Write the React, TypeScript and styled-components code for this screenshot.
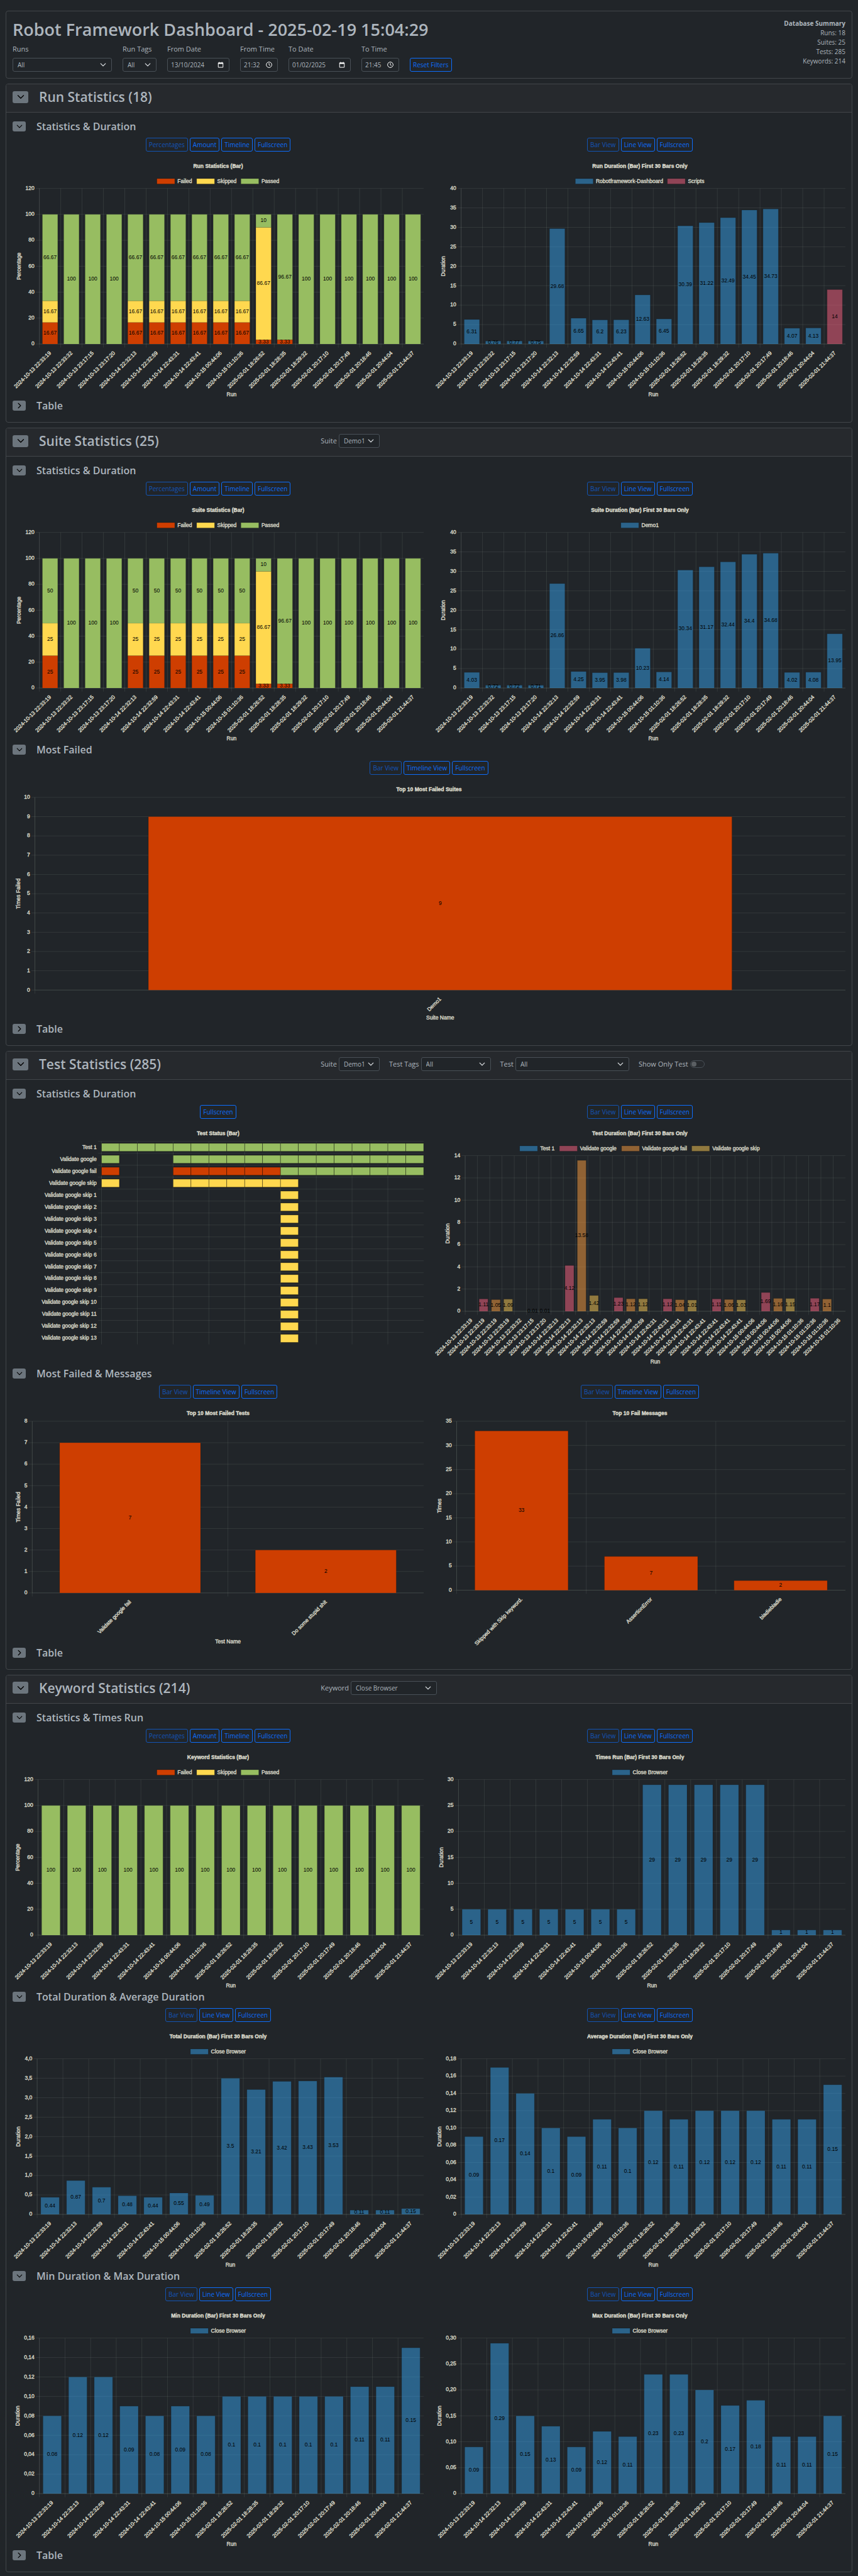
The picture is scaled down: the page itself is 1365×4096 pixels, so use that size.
import React, { useId, useState } from "react";
import styled, { createGlobalStyle, css } from "styled-components";

const theme = {
  bg: "#212529",
  head: "#26292d",
  border: "#42464a",
  inputBorder: "#495057",
  text: "#adb5bd",
  primary: "#0d6efd",
  secondary: "#6c757d",
  chartText: "#e2e1d8",
  grid: "rgba(205, 225, 210, 0.15)",
  failed: "#ce3e01",
  skipped: "#ffd84f",
  passed: "#97bd61",
  blue: "rgba(54, 162, 235, 0.5)",
  pink: "rgba(255, 99, 132, 0.5)",
  orange: "rgba(255, 159, 64, 0.5)",
  gold: "rgba(255, 205, 86, 0.5)",
};

const GlobalStyle = createGlobalStyle`
  *, *::before, *::after { box-sizing: border-box; }
  body {
    margin: 0;
    background: ${theme.bg};
    color: ${theme.text};
    font-family: "Open Sans", "Noto Sans", sans-serif;
    font-size: 11px;
  }
  h1, h2, h3 { margin: 0; font-weight: 600; white-space: nowrap; }
  button, input, select { font-family: inherit; }
`;

/* ---------- page parts ---------- */

const Page = styled.main`
  display: flex;
  flex-direction: column;
  gap: 8px;
  padding: 17px 9px 7px;
`;

const Card = styled.section`
  border: 1px solid ${theme.border};
  border-radius: 4px;
  overflow: hidden;
`;

const TopCard = styled.header`
  display: flex;
  justify-content: space-between;
  padding: 12px 10px 10px;
  border: 1px solid ${theme.border};
  border-radius: 4px;
`;

const PageTitle = styled.h1`
  font-size: 27px;
  line-height: 34px;
`;

const FilterRow = styled.form`
  display: flex;
  align-items: flex-end;
  gap: 17px;
  margin-top: 7px;
`;

const Field = styled.div`
  display: flex;
  flex-direction: column;
  gap: 7px;
`;

const FieldLabel = styled.label`
  font-size: 11px;
  line-height: 14px;
  white-space: nowrap;
`;

const Control = styled.span<{ $width: number }>`
  display: grid;
  grid-template-columns: 1fr auto;
  align-items: center;
  width: ${(p) => p.$width}px;
  height: 22px;
`;

const controlBox = css`
  grid-area: 1 / 1 / 2 / 3;
  width: 100%;
  height: 22px;
  margin: 0;
  padding: 0 7px;
  border: 1px solid ${theme.inputBorder};
  border-radius: 3px;
  background: ${theme.bg};
  color: ${theme.text};
  font-size: 10px;
`;

const Select = styled.select`
  ${controlBox}
  appearance: none;
`;

const Input = styled.input`
  ${controlBox}
  padding: 0 5px;
`;

const ControlIcon = styled.svg`
  grid-area: 1 / 2 / 2 / 3;
  width: 10px;
  height: 10px;
  margin-right: 9px;
  fill: none;
  pointer-events: none;
`;

const Summary = styled.aside`
  font-size: 10px;
  line-height: 15px;
  text-align: right;
`;

const CardHead = styled.div`
  display: flex;
  align-items: center;
  height: 45px;
  padding: 0 10px 4px;
  border-bottom: 1px solid ${theme.border};
  background: ${theme.head};
`;

const HeadTitle = styled.div`
  display: flex;
  align-items: center;
  gap: 17px;
  flex: 0 0 37%;
`;

const SectionTitle = styled.h2`
  font-size: 21px;
  line-height: 28px;
`;

const HeadControls = styled.div`
  display: flex;
  align-items: center;
  gap: 15px;
`;

const InlineField = styled.div`
  display: flex;
  align-items: center;
  gap: 3px;
`;

const Switch = styled.input`
  appearance: none;
  display: flex;
  align-items: center;
  width: 23px;
  height: 12px;
  margin: 0;
  padding: 0 1px;
  border: 1px solid ${theme.inputBorder};
  border-radius: 6px;
  &::before {
    content: "";
    width: 8px;
    height: 8px;
    border-radius: 4px;
    background: #5b5f63;
  }
  &:checked {
    justify-content: flex-end;
    background: ${theme.primary};
  }
`;

const CardBody = styled.div`
  padding: 12px 10px 16px;
`;

const BlockHead = styled.div`
  display: flex;
  align-items: center;
  gap: 17px;
  height: 20px;
`;

const BlockTitle = styled.h3`
  font-size: 16px;
  line-height: 20px;
`;

const Toggle = styled.button<{ $large?: boolean }>`
  display: grid;
  place-items: center;
  width: ${(p) => (p.$large ? 25 : 21)}px;
  height: ${(p) => (p.$large ? 19 : 16)}px;
  padding: 0;
  border: 0;
  border-radius: 3px;
  background: ${theme.secondary};
  & > svg {
    width: ${(p) => (p.$large ? 12 : 10)}px;
    height: ${(p) => (p.$large ? 12 : 10)}px;
  }
`;

const ChartRow = styled.div<{ $columns: number }>`
  display: grid;
  grid-template-columns: repeat(${(p) => p.$columns}, minmax(0, 1fr));
  gap: 17px;
  padding-top: 8px;
`;

const ChartCell = styled.div`
  display: flex;
  flex-direction: column;
  gap: 11px;
`;

const ButtonRow = styled.div`
  display: flex;
  justify-content: center;
  gap: 3px;
`;

const OutlineButton = styled.button`
  height: 22px;
  padding: 0 4px;
  border: 1px solid ${theme.primary};
  border-radius: 3px;
  background: transparent;
  color: ${theme.primary};
  font-size: 10px;
  line-height: 20px;
  white-space: nowrap;
  &:disabled {
    opacity: 0.65;
  }
`;

const Canvas = styled.svg`
  display: block;
  width: 100%;
  height: auto;
  font-family: "Liberation Sans", Arial, sans-serif;
  font-size: 12px;
`;

const ChartText = styled.text`
  fill: ${theme.chartText};
  stroke: ${theme.chartText};
  stroke-width: 0.4;
`;

const BarText = styled.text`
  fill: #000;
`;

/* ---------- icons ---------- */

function Chevron({ open }: { open: boolean }) {
  return (
    <svg viewBox="0 0 16 16" fill="none" stroke="#000" strokeWidth="1.8" strokeLinecap="round" strokeLinejoin="round" aria-hidden="true">
      <path d={open ? "M2 5l6 6 6-6" : "M5 2l6 6-6 6"} />
    </svg>
  );
}

function SelectArrow() {
  return (
    <ControlIcon viewBox="0 0 16 16" stroke="#dee2e6" strokeWidth="2" strokeLinecap="round" strokeLinejoin="round" aria-hidden="true">
      <path d="M2 5l6 6 6-6" />
    </ControlIcon>
  );
}

function CalendarIcon() {
  return (
    <ControlIcon viewBox="0 0 16 16" stroke="#fff" strokeWidth="1.6" aria-hidden="true">
      <path d="M2 3h12v11.5H2z" />
      <path d="M2 4.4h12" strokeWidth="2.8" />
      <path d="M4.6 0.8v2M11.4 0.8v2" />
    </ControlIcon>
  );
}

function ClockIcon() {
  return (
    <ControlIcon viewBox="0 0 16 16" stroke="#fff" strokeWidth="1.6" aria-hidden="true">
      <circle cx="8" cy="8" r="7" />
      <path d="M8 3.5V8l3 2.4" />
    </ControlIcon>
  );
}

/* ---------- charts ---------- */

const CHART_H = 539;
const HALF = 920;
const FULL = 1864;

type LegendItem = { label: string; color: string; width: number };
type Bar = { value: number; color: string };

function Txt(p: React.SVGProps<SVGTextElement>) {
  return <ChartText dominantBaseline="central" textAnchor="middle" {...p} />;
}

function Legend({ items, center }: { items: LegendItem[]; center: number }) {
  const total = items.reduce((s, i) => s + 46 + i.width, 0) + 10 * (items.length - 1);
  let x = center - total / 2;
  return (
    <g>
      {items.map((i) => {
        const at = x;
        x += 56 + i.width;
        return (
          <g key={i.label}>
            <rect x={at} y={45} width={40} height={12} fill={i.color} stroke="rgba(0,0,0,0.3)" />
            <Txt x={at + 46} y={50} textAnchor="start">{i.label}</Txt>
          </g>
        );
      })}
    </g>
  );
}

type BarChartProps = {
  title: string;
  width?: number;
  left: number;
  bottom?: number;
  yTitle: string;
  yTitleX: number;
  xTitle?: string;
  max: number;
  step: number;
  decimals?: number;
  legend?: LegendItem[];
  labels: string[];
  bars: Bar[][];
};

function BarChart(c: BarChartProps) {
  const width = c.width ?? HALF;
  const bottom = c.bottom ?? 415;
  const top = c.legend ? 67 : 35;
  const plotW = width - c.left;
  const cat = plotW / c.labels.length;
  const y = (v: number) => bottom - (v / c.max) * (bottom - top);
  const steps = Math.round(c.max / c.step);
  const ticks = Array.from({ length: steps + 1 }, (_, i) => i * c.step);
  const fmt = (v: number) => (v === 0 ? "0" : v.toFixed(c.decimals ?? 0).replace(".", ","));
  const mid = (top + bottom) / 2;
  return (
    <Canvas viewBox={`0 0 ${width} ${CHART_H}`} role="img" aria-label={c.title}>
      <Txt x={width / 2} y={17} fontWeight="bold">{c.title}</Txt>
      {c.legend && <Legend items={c.legend} center={width / 2} />}
      <g stroke={theme.grid}>
        {ticks.map((t) => (
          <line key={t} x1={c.left - 8} x2={width} y1={y(t)} y2={y(t)} />
        ))}
        {c.labels.map((_, i) => (
          <line key={i} x1={c.left + i * cat} x2={c.left + i * cat} y1={top} y2={bottom + 8} />
        ))}
        <line x1={c.left} x2={c.left} y1={top} y2={bottom} />
        <line x1={c.left} x2={width} y1={bottom} y2={bottom} />
      </g>
      {ticks.map((t) => (
        <Txt key={t} x={c.left - 11} y={y(t) - 1} textAnchor="end">{fmt(t)}</Txt>
      ))}
      {c.bars.map((stack, i) => {
        const cx = c.left + (i + 0.5) * cat;
        let base = 0;
        return (
          <g key={i}>
            {stack.map((b, j) => {
              const y0 = y(base);
              base += b.value;
              const y1 = y(base);
              if (b.value === 0) return null;
              return (
                <g key={j}>
                  <rect x={cx - cat * 0.36} width={cat * 0.72} y={y1} height={y0 - y1} fill={b.color} />
                  <path
                    d={`M${cx - cat * 0.36} ${y0}V${y1}H${cx + cat * 0.36}V${y0}`}
                    fill="none"
                    stroke="rgba(0,0,0,0.25)"
                  />
                  <BarText x={cx} y={(y0 + y1) / 2 - 1} textAnchor="middle" dominantBaseline="central">{b.value}</BarText>
                </g>
              );
            })}
          </g>
        );
      })}
      {c.labels.map((l, i) => {
        const x = c.left + (i + 0.5) * cat + 3;
        return (
          <ChartText key={i} textAnchor="end" transform={`translate(${x} ${bottom + 21}) rotate(-45)`}>
            {l}
          </ChartText>
        );
      })}
      <Txt transform={`translate(${c.yTitleX} ${mid}) rotate(-90)`}>{c.yTitle}</Txt>
      {c.xTitle && <Txt x={c.left + plotW / 2} y={528}>{c.xTitle}</Txt>}
    </Canvas>
  );
}

const STATUS_COLOR: Record<string, string> = { P: theme.passed, F: theme.failed, S: theme.skipped };

const statusRows: [string, string][] = [
  ["Test 1", "PPPPPPPPPPPPPPPPPP"],
  ["Validate google", "P---PPPPPPPPPPPPPP"],
  ["Validate google fail", "F---FFFFFFPPPPPPPP"],
  ["Validate google skip", "S---SSSSSSS-------"],
  ...Array.from({ length: 13 }, (_, i): [string, string] => [`Validate google skip ${i + 1}`, "----------S-------"]),
];

function StatusChart() {
  const left = 199;
  const top = 35;
  const row = 454 / statusRows.length;
  const unit = (HALF - left) / 18;
  return (
    <Canvas viewBox={`0 0 ${HALF} ${CHART_H}`} role="img" aria-label="Test Status (Bar)">
      <Txt x={HALF / 2} y={17} fontWeight="bold">Test Status (Bar)</Txt>
      <g stroke={theme.grid}>
        {statusRows.map((_, i) => (
          <line key={i} x1={left - 8} x2={HALF} y1={top + i * row} y2={top + i * row} />
        ))}
        {Array.from({ length: 9 }, (_, i) => (
          <line key={i} x1={left + i * 2 * unit} x2={left + i * 2 * unit} y1={top} y2={top + 454} />
        ))}
      </g>
      {statusRows.map(([name, runs], r) => {
        const cy = top + (r + 0.5) * row;
        return (
          <g key={name}>
            <Txt x={left - 11} y={cy - 1} textAnchor="end">{name}</Txt>
            {runs.split("").map((s, i) =>
              s === "-" ? null : (
                <rect
                  key={i}
                  x={left + i * unit}
                  y={cy - 9}
                  width={unit}
                  height={18}
                  fill={STATUS_COLOR[s]}
                  stroke="rgba(0,0,0,0.5)"
                />
              )
            )}
          </g>
        );
      })}
    </Canvas>
  );
}

/* ---------- data ---------- */

const RUNS = [
  "2024-10-13 22:33:19", "2024-10-13 22:33:32", "2024-10-13 23:17:15", "2024-10-13 23:17:20",
  "2024-10-14 22:32:13", "2024-10-14 22:32:59", "2024-10-14 22:43:31", "2024-10-14 22:43:41",
  "2024-10-15 00:44:06", "2024-10-15 01:10:36", "2025-02-01 18:26:52", "2025-02-01 18:28:35",
  "2025-02-01 18:29:32", "2025-02-01 20:17:10", "2025-02-01 20:17:49", "2025-02-01 20:18:46",
  "2025-02-01 20:44:04", "2025-02-01 21:44:37",
];
const KEYWORD_RUNS = RUNS.filter((_, i) => i < 1 || i > 3);
const TEST_RUNS = RUNS.slice(0, 10).flatMap((r, i) => (i > 0 && i < 4 ? [r] : [r, r, r, r]));

const one = (values: number[], color: string): Bar[][] => values.map((value) => [{ value, color }]);
const stack = (f: number, s: number, p: number): Bar[] => [
  { value: f, color: theme.failed },
  { value: s, color: theme.skipped },
  { value: p, color: theme.passed },
];
const mixed = (f: number, s: number, p: number) =>
  RUNS.map((_, i) => {
    if (i === 10) return stack(3.33, 86.67, 10);
    if (i === 11) return stack(3.33, 0, 96.67);
    if (i === 0 || (i > 3 && i < 10)) return stack(f, s, p);
    return stack(0, 0, 100);
  });

const statusLegend: LegendItem[] = [
  { label: "Failed", color: theme.failed, width: 33 },
  { label: "Skipped", color: theme.skipped, width: 43 },
  { label: "Passed", color: theme.passed, width: 40 },
];
const closeBrowser: LegendItem[] = [{ label: "Close Browser", color: theme.blue, width: 78 }];

const durations = [6.31, 0.76, 0.77, 0.75, 29.68, 6.65, 6.2, 6.23, 12.63, 6.45, 30.39, 31.22, 32.49, 34.45, 34.73, 4.07, 4.13];
const suiteDurations = [4.03, 0.72, 0.72, 0.71, 26.86, 4.25, 3.95, 3.98, 10.23, 4.14, 30.34, 31.17, 32.44, 34.4, 34.68, 4.02, 4.08, 13.95];
const testDurations = [
  0, 1.11, 1.05, 1.09, 0, 0.01, 0.01, 0, 4.12, 13.58, 1.42, 0, 1.23, 1.12, 1.12, 0, 1.12, 1.04, 1.01,
  0, 1.11, 1.06, 1.03, 0, 1.69, 1.16, 1.15, 0, 1.17, 1.1, 0,
];
const testColors = [theme.blue, theme.pink, theme.orange, theme.gold];
const testBars: Bar[][] = testDurations.map((value, i) => [
  { value, color: i < 4 ? testColors[i] : i < 7 ? theme.blue : testColors[(i - 7) % 4] },
]);

/* ---------- composed parts ---------- */

function SelectBox({ id, width, value }: { id: string; width: number; value: string }) {
  return (
    <Control $width={width}>
      <Select id={id} defaultValue={value}>
        <option>{value}</option>
      </Select>
      <SelectArrow />
    </Control>
  );
}

function InlineSelect({ label, width, value }: { label: string; width: number; value: string }) {
  const id = useId();
  return (
    <InlineField>
      <FieldLabel htmlFor={id}>{label}</FieldLabel>
      <SelectBox id={id} width={width} value={value} />
    </InlineField>
  );
}

type FilterProps = { label: string; width: number; value: string; kind?: "select" | "date" | "time" };

function Filter({ label, width, value, kind = "select" }: FilterProps) {
  const id = useId();
  return (
    <Field>
      <FieldLabel htmlFor={id}>{label}</FieldLabel>
      {kind === "select" ? (
        <SelectBox id={id} width={width} value={value} />
      ) : (
        <Control $width={width}>
          <Input id={id} type="text" defaultValue={value} />
          {kind === "date" ? <CalendarIcon /> : <ClockIcon />}
        </Control>
      )}
    </Field>
  );
}

const STATS = ["Percentages", "Amount", "Timeline", "Fullscreen"];
const LINES = ["Bar View", "Line View", "Fullscreen"];
const TIMES = ["Bar View", "Timeline View", "Fullscreen"];

function Graph({ buttons, children }: { buttons: string[]; children: React.ReactNode }) {
  return (
    <ChartCell>
      <ButtonRow>
        {buttons.map((b, i) => (
          <OutlineButton key={b} type="button" disabled={i === 0 && buttons.length > 1}>{b}</OutlineButton>
        ))}
      </ButtonRow>
      {children}
    </ChartCell>
  );
}

function Block({ title, children }: { title: string; children?: React.ReactNode }) {
  const [open, setOpen] = useState(Boolean(children));
  return (
    <div>
      <BlockHead>
        <Toggle type="button" aria-label={`Toggle ${title}`} aria-expanded={open} onClick={() => setOpen(!open)}>
          <Chevron open={open} />
        </Toggle>
        <BlockTitle>{title}</BlockTitle>
      </BlockHead>
      {open && children && <ChartRow $columns={React.Children.count(children)}>{children}</ChartRow>}
    </div>
  );
}

function Section({ title, controls, children }: { title: string; controls?: React.ReactNode; children: React.ReactNode }) {
  const [open, setOpen] = useState(true);
  return (
    <Card>
      <CardHead>
        <HeadTitle>
          <Toggle $large type="button" aria-label={`Toggle ${title}`} aria-expanded={open} onClick={() => setOpen(!open)}>
            <Chevron open={open} />
          </Toggle>
          <SectionTitle>{title}</SectionTitle>
        </HeadTitle>
        <HeadControls>{controls}</HeadControls>
      </CardHead>
      {open && (
        <CardBody>
          {children}
          <Block title="Table" />
        </CardBody>
      )}
    </Card>
  );
}

const percent = { yTitle: "Percentage", xTitle: "Run", max: 120, step: 20, legend: statusLegend };
const duration = { yTitle: "Duration", xTitle: "Run" };
const keyword = { ...duration, labels: KEYWORD_RUNS, legend: closeBrowser };

export default function App() {
  return (
    <>
      <GlobalStyle />
      <Page>
        <TopCard>
          <div>
            <PageTitle>Robot Framework Dashboard - 2025-02-19 15:04:29</PageTitle>
            <FilterRow>
              <Filter label="Runs" width={158} value="All" />
              <Filter label="Run Tags" width={54} value="All" />
              <Filter label="From Date" width={99} value="13/10/2024" kind="date" />
              <Filter label="From Time" width={60} value="21:32" kind="time" />
              <Filter label="To Date" width={99} value="01/02/2025" kind="date" />
              <Filter label="To Time" width={60} value="21:45" kind="time" />
              <OutlineButton type="button">Reset Filters</OutlineButton>
            </FilterRow>
          </div>
          <Summary>
            <strong>Database Summary</strong>
            <div>Runs: 18</div>
            <div>Suites: 25</div>
            <div>Tests: 285</div>
            <div>Keywords: 214</div>
          </Summary>
        </TopCard>

        <Section title="Run Statistics (18)">
          <Block title="Statistics & Duration">
            <Graph buttons={STATS}>
              <BarChart {...percent} title="Run Statistics (Bar)" left={60} yTitleX={14} labels={RUNS} bars={mixed(16.67, 16.67, 66.67)} />
            </Graph>
            <Graph buttons={LINES}>
              <BarChart
                {...duration}
                title="Run Duration (Bar) First 30 Bars Only"
                left={60}
                yTitleX={20}
                max={40}
                step={5}
                labels={RUNS}
                legend={[
                  { label: "Robotframework-Dashboard", color: theme.blue, width: 150 },
                  { label: "Scripts", color: theme.pink, width: 37 },
                ]}
                bars={[...one(durations, theme.blue), ...one([14], theme.pink)]}
              />
            </Graph>
          </Block>
        </Section>

        <Section title="Suite Statistics (25)" controls={<InlineSelect label="Suite" width={65} value="Demo1" />}>
          <Block title="Statistics & Duration">
            <Graph buttons={STATS}>
              <BarChart {...percent} title="Suite Statistics (Bar)" left={60} yTitleX={14} labels={RUNS} bars={mixed(25, 25, 50)} />
            </Graph>
            <Graph buttons={LINES}>
              <BarChart
                {...duration}
                title="Suite Duration (Bar) First 30 Bars Only"
                left={60}
                yTitleX={20}
                max={40}
                step={5}
                labels={RUNS}
                legend={[{ label: "Demo1", color: theme.blue, width: 39 }]}
                bars={one(suiteDurations, theme.blue)}
              />
            </Graph>
          </Block>
          <Block title="Most Failed">
            <Graph buttons={TIMES}>
              <BarChart
                title="Top 10 Most Failed Suites"
                width={FULL}
                left={50}
                bottom={466}
                yTitle="Times Failed"
                yTitleX={12}
                xTitle="Suite Name"
                max={10}
                step={1}
                labels={["Demo1"]}
                bars={one([9], theme.failed)}
              />
            </Graph>
          </Block>
        </Section>

        <Section
          title="Test Statistics (285)"
          controls={
            <>
              <InlineSelect label="Suite" width={65} value="Demo1" />
              <InlineSelect label="Test Tags" width={111} value="All" />
              <InlineSelect label="Test" width={181} value="All" />
              <InlineField>
                <FieldLabel htmlFor="only-test">Show Only Test</FieldLabel>
                <Switch id="only-test" type="checkbox" role="switch" />
              </InlineField>
            </>
          }
        >
          <Block title="Statistics & Duration">
            <Graph buttons={["Fullscreen"]}>
              <StatusChart />
            </Graph>
            <Graph buttons={LINES}>
              <BarChart
                {...duration}
                title="Test Duration (Bar) First 30 Bars Only"
                left={69}
                yTitleX={30}
                max={14}
                step={2}
                labels={TEST_RUNS}
                legend={[
                  { label: "Test 1", color: theme.blue, width: 33 },
                  { label: "Validate google", color: theme.pink, width: 83 },
                  { label: "Validate google fail", color: theme.orange, width: 101 },
                  { label: "Validate google skip", color: theme.gold, width: 107 },
                ]}
                bars={testBars}
              />
            </Graph>
          </Block>
          <Block title="Most Failed & Messages">
            <Graph buttons={TIMES}>
              <BarChart
                title="Top 10 Most Failed Tests"
                left={44}
                bottom={419}
                yTitle="Times Failed"
                yTitleX={12}
                xTitle="Test Name"
                max={8}
                step={1}
                labels={["Validate google fail", "Do some stupid shit"]}
                bars={one([7, 2], theme.failed)}
              />
            </Graph>
            <Graph buttons={TIMES}>
              <BarChart
                title="Top 10 Fail Messages"
                left={50}
                bottom={413}
                yTitle="Times"
                yTitleX={11}
                max={35}
                step={5}
                labels={["Skipped with Skip keyword.", "AssertionError", "bladiebladie"]}
                bars={one([33, 7, 2], theme.failed)}
              />
            </Graph>
          </Block>
        </Section>

        <Section title="Keyword Statistics (214)" controls={<InlineSelect label="Keyword" width={137} value="Close Browser" />}>
          <Block title="Statistics & Times Run">
            <Graph buttons={STATS}>
              <BarChart
                {...percent}
                title="Keyword Statistics (Bar)"
                left={57}
                yTitleX={11}
                labels={KEYWORD_RUNS}
                bars={KEYWORD_RUNS.map(() => stack(0, 0, 100))}
              />
            </Graph>
            <Graph buttons={LINES}>
              <BarChart
                {...keyword}
                title="Times Run (Bar) First 30 Bars Only"
                left={54}
                yTitleX={15}
                max={30}
                step={5}
                bars={one([5, 5, 5, 5, 5, 5, 5, 29, 29, 29, 29, 29, 1, 1, 1], theme.blue)}
              />
            </Graph>
          </Block>
          <Block title="Total Duration & Average Duration">
            <Graph buttons={LINES}>
              <BarChart
                {...keyword}
                title="Total Duration (Bar) First 30 Bars Only"
                left={55}
                yTitleX={12}
                max={4}
                step={0.5}
                decimals={1}
                bars={one([0.44, 0.87, 0.7, 0.48, 0.44, 0.55, 0.49, 3.5, 3.21, 3.42, 3.43, 3.53, 0.11, 0.11, 0.15], theme.blue)}
              />
            </Graph>
            <Graph buttons={LINES}>
              <BarChart
                {...keyword}
                title="Average Duration (Bar) First 30 Bars Only"
                left={60}
                yTitleX={11}
                max={0.18}
                step={0.02}
                decimals={2}
                bars={one([0.09, 0.17, 0.14, 0.1, 0.09, 0.11, 0.1, 0.12, 0.11, 0.12, 0.12, 0.12, 0.11, 0.11, 0.15], theme.blue)}
              />
            </Graph>
          </Block>
          <Block title="Min Duration & Max Duration">
            <Graph buttons={LINES}>
              <BarChart
                {...keyword}
                title="Min Duration (Bar) First 30 Bars Only"
                left={60}
                yTitleX={11}
                max={0.16}
                step={0.02}
                decimals={2}
                bars={one([0.08, 0.12, 0.12, 0.09, 0.08, 0.09, 0.08, 0.1, 0.1, 0.1, 0.1, 0.1, 0.11, 0.11, 0.15], theme.blue)}
              />
            </Graph>
            <Graph buttons={LINES}>
              <BarChart
                {...keyword}
                title="Max Duration (Bar) First 30 Bars Only"
                left={60}
                yTitleX={11}
                max={0.3}
                step={0.05}
                decimals={2}
                bars={one([0.09, 0.29, 0.15, 0.13, 0.09, 0.12, 0.11, 0.23, 0.23, 0.2, 0.17, 0.18, 0.11, 0.11, 0.15], theme.blue)}
              />
            </Graph>
          </Block>
        </Section>
      </Page>
    </>
  );
}
